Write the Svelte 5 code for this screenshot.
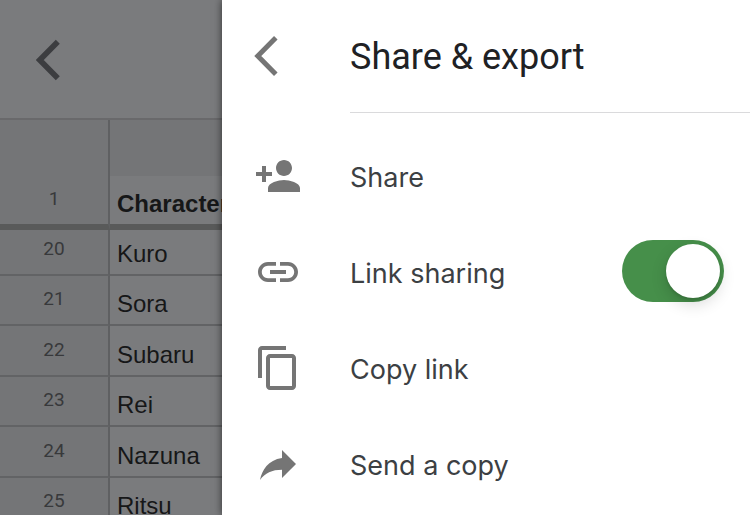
<script>
  let linkSharing = $state(true);

  const rows = [
    { number: 20, name: 'Kuro' },
    { number: 21, name: 'Sora' },
    { number: 22, name: 'Subaru' },
    { number: 23, name: 'Rei' },
    { number: 24, name: 'Nazuna' },
    { number: 25, name: 'Ritsu' }
  ];

  const icons = {
    share:
      'M15 12c2.21 0 4-1.79 4-4s-1.79-4-4-4-4 1.79-4 4 1.79 4 4 4zm-9-2V7H4v3H1v2h3v3h2v-3h3v-2H6zm9 4c-2.67 0-8 1.34-8 4v2h16v-2c0-2.66-5.33-4-8-4z',
    link:
      'M3.9 12c0-1.71 1.39-3.1 3.1-3.1h4V7H7c-2.76 0-5 2.24-5 5s2.24 5 5 5h4v-1.9H7c-1.71 0-3.1-1.39-3.1-3.1zM8 13h8v-2H8v2zm9-6h-4v1.9h4c1.71 0 3.1 1.39 3.1 3.1s-1.39 3.1-3.1 3.1h-4V17h4c2.76 0 5-2.24 5-5s-2.24-5-5-5z',
    copy:
      'M16 1H4c-1.1 0-2 .9-2 2v14h2V3h12V1zm3 4H8c-1.1 0-2 .9-2 2v14c0 1.1.9 2 2 2h11c1.1 0 2-.9 2-2V7c0-1.1-.9-2-2-2zm0 16H8V7h11v14z',
    send: 'M14 9V5l7 7-7 7v-4.1c-5 0-8.5 1.6-11 5.1 1-5 4-10 11-11z'
  };
</script>

{#snippet icon(path)}
  <svg class="icon" viewBox="0 0 24 24" aria-hidden="true"><path d={path} /></svg>
{/snippet}

{#snippet chevron()}
  <svg class="chevron" viewBox="0 0 48 48" aria-hidden="true">
    <path d="M21.8 5.8L3.8 24L21.8 42.2" />
  </svg>
{/snippet}

<div class="app">
  <section class="sheet">
    <div class="toolbar">
      <button class="back" aria-label="Close spreadsheet">{@render chevron()}</button>
    </div>
    <table>
      <thead>
        <tr class="letters"><td></td><td></td></tr>
        <tr class="frozen">
          <th scope="row">1</th>
          <th scope="col" class="name">Character</th>
        </tr>
      </thead>
      <tbody>
        {#each rows as row}
          <tr>
            <th scope="row">{row.number}</th>
            <td class="name">{row.name}</td>
          </tr>
        {/each}
      </tbody>
    </table>
  </section>

  <main class="panel">
    <header>
      <button class="back" aria-label="Back">{@render chevron()}</button>
      <h1>Share &amp; export</h1>
    </header>
    <ul>
      <li><button class="item">{@render icon(icons.share)}<span>Share</span></button></li>
      <li>
        <label class="item">
          {@render icon(icons.link)}<span>Link sharing</span>
          <input type="checkbox" role="switch" bind:checked={linkSharing} />
        </label>
      </li>
      <li><button class="item">{@render icon(icons.copy)}<span>Copy link</span></button></li>
      <li><button class="item">{@render icon(icons.send)}<span>Send a copy</span></button></li>
    </ul>
  </main>
</div>

<style>
  .app {
    display: grid;
    grid-template-columns: 222px minmax(0, 1fr);
    height: 100vh;
    overflow: hidden;
    background: #fff;
  }

  button {
    margin: 0;
    padding: 0;
    border: 0;
    background: none;
    color: inherit;
    font: inherit;
    text-align: left;
    cursor: pointer;
  }

  .back {
    display: flex;
  }

  .chevron {
    width: 48px;
    height: 48px;
    fill: none;
    stroke: #757575;
    stroke-width: 5;
  }

  .sheet {
    min-width: 0;
    overflow: hidden;
    background: #7a7b7d;
    font-family: 'Liberation Sans', Arial, sans-serif;
  }

  .toolbar {
    display: flex;
    align-items: center;
    box-sizing: border-box;
    height: 120px;
    padding: 2px 0 0 36px;
    border-bottom: 2px solid #69696b;
  }

  .toolbar .chevron {
    stroke: #3c3d40;
    stroke-width: 5.6;
  }

  table {
    width: 100%;
    table-layout: fixed;
    border-collapse: separate;
    border-spacing: 0;
  }

  th,
  td {
    box-sizing: border-box;
    height: 50px;
    padding: 0;
    border-bottom: 2px solid #626365;
    vertical-align: bottom;
    white-space: nowrap;
  }

  tr > :first-child {
    width: 110px;
    padding-bottom: 13px;
    border-right: 2px solid #5f6062;
    background: #747577;
    color: #38393b;
    font: 400 19px/24px Roboto, sans-serif;
    text-align: center;
  }

  .letters td {
    height: 56px;
    border-bottom: 0;
    background: #747577;
  }

  .frozen th {
    height: 54px;
    border-bottom: 6px solid #595a5a;
  }

  .name {
    padding: 0 0 6px 7px;
    color: #161718;
    font-size: 24px;
    line-height: 28px;
    text-align: left;
  }

  /* The first scrolled row is partly tucked under the frozen one. */
  tbody tr:first-child > * {
    height: 46px;
  }

  tbody tr:nth-child(2n + 3) > * {
    height: 51px;
  }

  .panel {
    position: relative;
    background: #fff;
    box-shadow: 0 0 8px rgba(0, 0, 0, 0.6);
    font-family: Inter, sans-serif;
  }

  header {
    display: flex;
    align-items: center;
    gap: 48px;
    height: 112px;
    padding-left: 32px;
  }

  h1 {
    margin: 0;
    padding-top: 2px;
    color: #202124;
    font: 400 36px/44px Roboto, sans-serif;
    white-space: nowrap;
  }

  ul {
    margin: 0;
    padding: 0;
    list-style: none;
  }

  ul::before {
    content: '';
    display: block;
    height: 15px;
    margin-left: 128px;
    border-top: 1px solid #dadadc;
  }

  .item {
    display: flex;
    align-items: center;
    gap: 48px;
    box-sizing: border-box;
    width: 100%;
    height: 96px;
    padding: 0 26px 0 32px;
    color: #3c4043;
    font-size: 27px;
    line-height: 36px;
    white-space: nowrap;
    cursor: pointer;
  }

  .item span {
    padding-top: 4px;
  }

  .icon {
    flex: none;
    width: 48px;
    height: 48px;
    fill: #757575;
  }

  input {
    appearance: none;
    display: flex;
    align-items: center;
    box-sizing: border-box;
    width: 102px;
    height: 62px;
    margin: 0 0 2px auto;
    padding: 4px;
    border-radius: 31px;
    background: #bdbdbd;
    cursor: pointer;
  }

  input::before {
    content: '';
    width: 54px;
    height: 54px;
    border-radius: 50%;
    background: #fff;
    box-shadow: 0 6px 16px rgba(0, 0, 0, 0.16), 0 2px 3px rgba(0, 0, 0, 0.12);
  }

  input:checked {
    justify-content: flex-end;
    background: #468f4a;
  }
</style>
